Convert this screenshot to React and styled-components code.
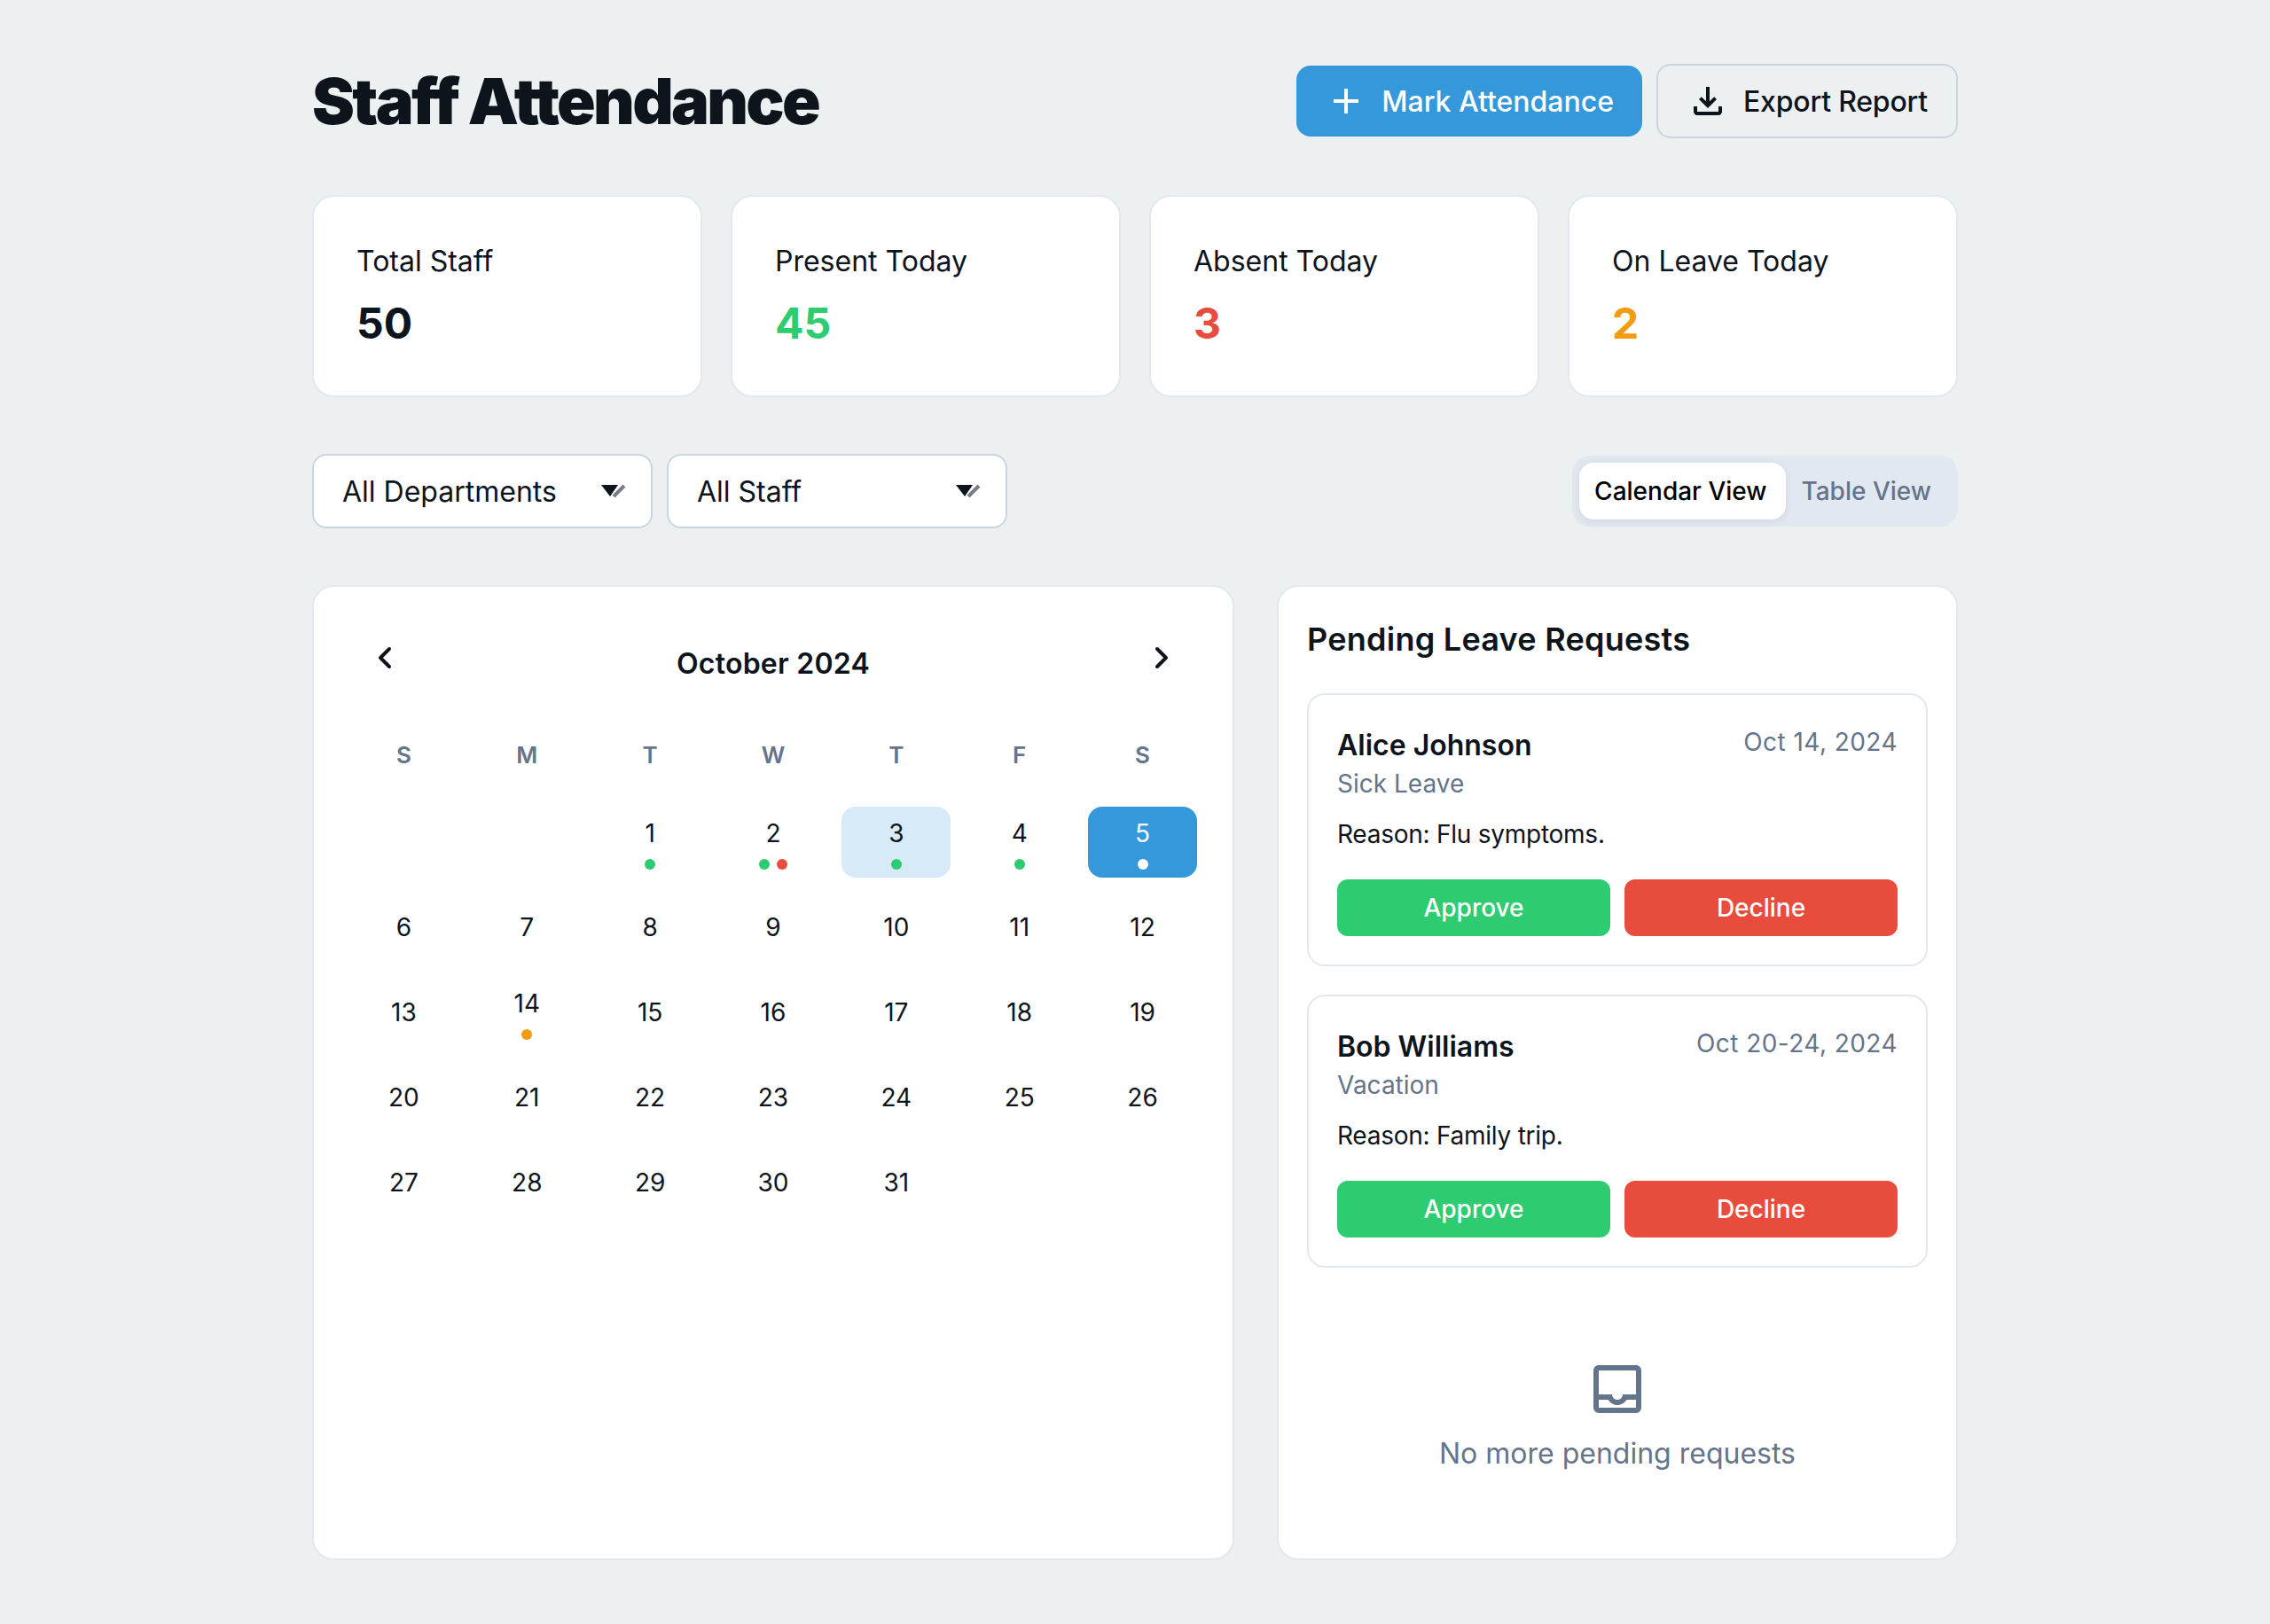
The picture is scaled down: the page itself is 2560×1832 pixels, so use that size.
import React from "react";
import styled, { createGlobalStyle } from "styled-components";
import { MdAdd, MdOutlineFileDownload, MdOutlineInbox } from "react-icons/md";
import { ChevronLeft, ChevronRight } from "lucide-react";

const C = {
  ink: "#0d141c",
  muted: "#64748b",
  line: "#e2e8f0",
  control: "#cbd5e0",
  blue: "#3498db",
  green: "#2ecc71",
  red: "#e74c3c",
  orange: "#f39c12",
};

const Global = createGlobalStyle`
  * { box-sizing: border-box; }
  html, body { margin: 0; padding: 0; background: #ecf0f1; }
  body { font-family: Inter, "Liberation Sans", sans-serif; color: ${C.ink}; }
  button { font-family: inherit; }
`;

const Page = styled.div`
  width: 1856px;
  margin: 0 auto;
  padding: 72px 0;
`;

const Header = styled.header`
  display: flex;
  align-items: center;
  justify-content: space-between;
  margin-bottom: 64px;
`;

const Title = styled.h1`
  margin: 0;
  font-size: 72px;
  line-height: 84px;
  font-weight: 900;
  letter-spacing: -2.7px;
  color: ${C.ink};
`;

const Actions = styled.div`
  display: flex;
  align-items: center;
  gap: 16px;
`;

const ActionButton = styled.button`
  display: flex;
  align-items: center;
  gap: 16px;
  height: ${(p) => (p.$primary ? "80px" : "84px")};
  padding: 0 32px;
  border: ${(p) => (p.$primary ? "none" : `2px solid ${C.control}`)};
  border-radius: 16px;
  background: ${(p) => (p.$primary ? C.blue : "transparent")};
  color: ${(p) => (p.$primary ? "#fff" : C.ink)};
  font-size: 32px;
  font-weight: 500;
  letter-spacing: ${(p) => (p.$primary ? "0" : "-0.2px")};
`;

const Stats = styled.section`
  display: grid;
  grid-template-columns: repeat(4, 1fr);
  gap: 32px;
  margin-bottom: 64px;
`;

const StatCard = styled.div`
  height: 228px;
  padding: 48px;
  background: #fff;
  border: 2px solid ${C.line};
  border-radius: 24px;
`;

const StatLabel = styled.div`
  font-size: 32px;
  line-height: 50px;
  margin-bottom: 13px;
  color: ${C.ink};
`;

const StatValue = styled.div`
  font-size: 48px;
  line-height: 64px;
  font-weight: 700;
  color: ${(p) => p.$color};
`;

const Controls = styled.section`
  display: flex;
  align-items: center;
  justify-content: space-between;
  margin-bottom: 64px;
`;

const Filters = styled.div`
  display: flex;
  gap: 16px;
`;

const Select = styled.button`
  display: flex;
  align-items: center;
  justify-content: space-between;
  width: 384px;
  height: 84px;
  padding: 0 28px 0 32px;
  background: #fff;
  border: 2px solid ${C.control};
  border-radius: 16px;
  color: ${C.ink};
  font-size: 32px;
`;

const Toggle = styled.div`
  display: flex;
  padding: 8px;
  height: 80px;
  background: ${C.line};
  border-radius: 20px;
`;

const ToggleOption = styled.button`
  height: 64px;
  padding: 0 22px 0 17px;
  border: none;
  border-radius: 16px;
  background: ${(p) => (p.$active ? "#fff" : "transparent")};
  color: ${(p) => (p.$active ? "#000" : C.muted)};
  box-shadow: ${(p) => (p.$active ? "0 2px 8px rgba(100,116,139,.15)" : "none")};
  font-size: 28px;
  font-weight: 500;
`;

const Main = styled.main`
  display: grid;
  grid-template-columns: 1040px 1fr;
  gap: 48px;
  height: 1100px;
`;

const Panel = styled.section`
  display: flex;
  flex-direction: column;
  background: #fff;
  border: 2px solid ${C.line};
  border-radius: 24px;
  padding: ${(p) => p.$padding};
`;

const MonthBar = styled.div`
  display: flex;
  align-items: center;
  justify-content: space-between;
  height: 80px;
  margin-bottom: 52px;
`;

const Month = styled.h2`
  margin: 14px 0 0;
  font-size: 32px;
  line-height: 48px;
  font-weight: 600;
  letter-spacing: 0.25px;
`;

const NavButton = styled.button`
  display: flex;
  align-items: center;
  justify-content: center;
  width: 80px;
  height: 80px;
  padding: 0;
  border: none;
  background: none;
  color: ${C.ink};
`;

const Grid = styled.div`
  display: grid;
  grid-template-columns: repeat(7, 1fr);
  gap: 16px;
`;

const Weekday = styled.div`
  height: 36px;
  margin-bottom: 24px;
  text-align: center;
  font-size: 26px;
  line-height: 36px;
  font-weight: 600;
  color: ${C.muted};
`;

const Day = styled.div`
  display: flex;
  flex-direction: column;
  align-items: center;
  justify-content: center;
  height: 80px;
  border-radius: 16px;
  font-size: 28px;
  line-height: 42px;
  background: ${(p) => (p.$selected ? C.blue : p.$today ? "#d6eaf8" : "transparent")};
  color: ${(p) => (p.$selected ? "#fff" : C.ink)};
`;

const Dots = styled.div`
  display: flex;
  gap: 8px;
  margin-top: 8px;
`;

const Dot = styled.span`
  width: 12px;
  height: 12px;
  border-radius: 50%;
  background: ${(p) => p.$color};
`;

const RequestsTitle = styled.h2`
  margin: 0 0 34px;
  font-size: 36px;
  line-height: 54px;
  font-weight: 600;
  letter-spacing: 0.25px;
  color: ${C.ink};
`;

const Requests = styled.div`
  display: flex;
  flex-direction: column;
  gap: 32px;
`;

const RequestCard = styled.article`
  padding: 32px;
  border: 2px solid ${C.line};
  border-radius: 20px;
`;

const RequestTop = styled.div`
  display: flex;
  align-items: flex-start;
  justify-content: space-between;
`;

const Name = styled.div`
  font-size: 32px;
  line-height: 50px;
  margin-bottom: -3px;
  font-weight: 600;
`;

const LeaveType = styled.div`
  font-size: 28px;
  line-height: 42px;
  color: ${C.muted};
`;

const DateText = styled.div`
  font-size: 28px;
  line-height: 42px;
  letter-spacing: 0.45px;
  color: ${C.muted};
`;

const Reason = styled.p`
  margin: 15px 0 30px;
  font-size: 28px;
  line-height: 42px;
  letter-spacing: -0.25px;
`;

const Decisions = styled.div`
  display: grid;
  grid-template-columns: 1fr 1fr;
  gap: 16px;
`;

const Decision = styled.button`
  height: 64px;
  border: none;
  border-radius: 12px;
  background: ${(p) => p.$color};
  color: #fff;
  font-size: 28px;
  font-weight: 500;
`;

const Empty = styled.div`
  display: flex;
  flex-direction: column;
  align-items: center;
  margin-top: 101px;
  color: ${C.muted};
  font-size: 32px;
  line-height: 48px;
`;

const EmptyIcon = styled(MdOutlineInbox)`
  display: block;
  margin-bottom: 13px;
`;

const SelectArrow = () => (
  <svg width="30" height="16" viewBox="0 0 30 16" aria-hidden="true">
    <path d="M16 14L28 2" fill="none" stroke="#767b85" strokeWidth="4" />
    <path d="M2 1h19l-9 13z" fill="#0d141c" />
  </svg>
);

const stats = [
  ["Total Staff", "50", C.ink],
  ["Present Today", "45", C.green],
  ["Absent Today", "3", C.red],
  ["On Leave Today", "2", C.orange],
];

const weekdays = ["S", "M", "T", "W", "T", "F", "S"];

const marks = {
  1: [C.green],
  2: [C.green, C.red],
  3: [C.green],
  4: [C.green],
  5: ["#fff"],
  14: [C.orange],
};

const cells = [null, null, ...Array.from({ length: 31 }, (_, i) => i + 1)];

const requests = [
  { name: "Alice Johnson", type: "Sick Leave", date: "Oct 14, 2024", reason: "Reason: Flu symptoms." },
  { name: "Bob Williams", type: "Vacation", date: "Oct 20-24, 2024", reason: "Reason: Family trip." },
];

export default function App() {
  return (
    <>
      <Global />
      <Page>
        <Header>
          <Title>Staff Attendance</Title>
          <Actions>
            <ActionButton $primary>
              <MdAdd size={48} />
              Mark Attendance
            </ActionButton>
            <ActionButton>
              <MdOutlineFileDownload size={48} />
              Export Report
            </ActionButton>
          </Actions>
        </Header>

        <Stats>
          {stats.map(([label, value, color]) => (
            <StatCard key={label}>
              <StatLabel>{label}</StatLabel>
              <StatValue $color={color}>{value}</StatValue>
            </StatCard>
          ))}
        </Stats>

        <Controls>
          <Filters>
            <Select>
              All Departments
              <SelectArrow />
            </Select>
            <Select>
              All Staff
              <SelectArrow />
            </Select>
          </Filters>
          <Toggle>
            <ToggleOption $active>Calendar View</ToggleOption>
            <ToggleOption>Table View</ToggleOption>
          </Toggle>
        </Controls>

        <Main>
          <Panel $padding="40px">
            <MonthBar>
              <NavButton aria-label="Previous month">
                <ChevronLeft size={40} strokeWidth={2.4} />
              </NavButton>
              <Month>October 2024</Month>
              <NavButton aria-label="Next month">
                <ChevronRight size={40} strokeWidth={2.4} />
              </NavButton>
            </MonthBar>
            <Grid>
              {weekdays.map((d, i) => (
                <Weekday key={i}>{d}</Weekday>
              ))}
              {cells.map((n, i) => (
                <Day key={i} $today={n === 3} $selected={n === 5}>
                  {n}
                  {marks[n] && (
                    <Dots>
                      {marks[n].map((color, j) => (
                        <Dot key={j} $color={color} />
                      ))}
                    </Dots>
                  )}
                </Day>
              ))}
            </Grid>
          </Panel>

          <Panel $padding="32px">
            <RequestsTitle>Pending Leave Requests</RequestsTitle>
            <Requests>
              {requests.map((r) => (
                <RequestCard key={r.name}>
                  <RequestTop>
                    <div>
                      <Name>{r.name}</Name>
                      <LeaveType>{r.type}</LeaveType>
                    </div>
                    <DateText>{r.date}</DateText>
                  </RequestTop>
                  <Reason>{r.reason}</Reason>
                  <Decisions>
                    <Decision $color={C.green}>Approve</Decision>
                    <Decision $color={C.red}>Decline</Decision>
                  </Decisions>
                </RequestCard>
              ))}
            </Requests>
            <Empty>
              <EmptyIcon size={72} />
              No more pending requests
            </Empty>
          </Panel>
        </Main>
      </Page>
    </>
  );
}
